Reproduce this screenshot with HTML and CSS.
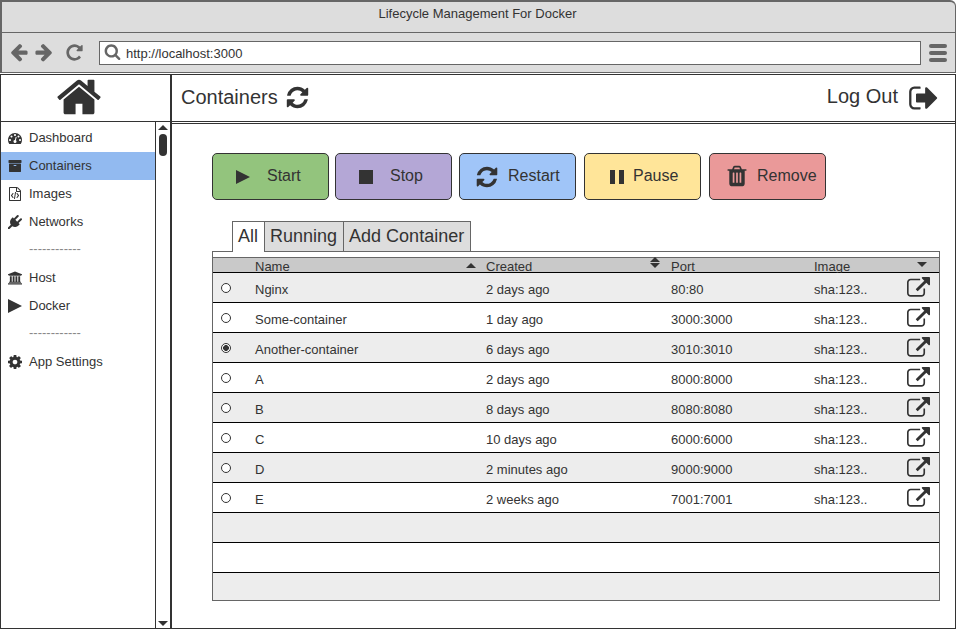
FILE: index.html
```html
<!DOCTYPE html>
<html lang="en">
<head>
<meta charset="utf-8">
<title>Lifecycle Management For Docker</title>
<link rel="stylesheet" href="styles.css">
</head>
<body>
<svg class="defs" width="0" height="0">
<symbol id="i-home" viewBox="0 0 1792 1792"><path d="M1472 992v480q0 26-19 45t-45 19h-384v-384h-256v384h-384q-26 0-45-19t-19-45v-480q0-1 .5-3t.5-3l575-474 575 474q1 2 1 6zm223-69l-62 74q-8 9-21 11h-3q-13 0-21-7l-692-577-692 577q-12 8-24 7-13-2-21-11l-62-74q-8-10-7-23.5t11-21.5l719-599q32-26 76-26t76 26l244 204v-195q0-14 9-23t23-9h192q14 0 23 9t9 23v408l219 182q10 8 11 21.5t-7 23.5z"/></symbol>
<symbol id="i-refresh" viewBox="0 0 1792 1792"><path d="M1639 1056q0 5-1 7-64 268-268 434.5t-478 166.5q-146 0-282.5-55t-243.5-157l-129 129q-19 19-45 19t-45-19-19-45v-448q0-26 19-45t45-19h448q26 0 45 19t19 45-19 45l-137 137q71 66 161 102t187 36q134 0 250-65t186-179q11-17 53-117 8-23 30-23h192q13 0 22.5 9.5t9.5 22.5zm25-800v448q0 26-19 45t-45 19h-448q-26 0-45-19t-19-45 19-45l138-138q-148-137-349-137-134 0-250 65t-186 179q-11 17-53 117-8 23-30 23h-199q-13 0-22.5-9.5t-9.5-22.5v-7q65-268 270-434.5t480-166.5q146 0 284 55.5t245 156.5l130-129q19-19 45-19t45 19 19 45z"/></symbol>
<symbol id="i-out" viewBox="0 0 1792 1792"><path d="M704 1440q0 4 1 20t.5 26.5-3 23.5-10 19.5-20.5 6.5h-320q-119 0-203.5-84.5t-84.5-203.5v-704q0-119 84.5-203.5t203.5-84.5h320q13 0 22.5 9.5t9.5 22.5q0 4 1 20t.5 26.5-3 23.5-10 19.5-20.5 6.5h-320q-66 0-113 47t-47 113v704q0 66 47 113t113 47h312l11.5 1 11.5 3 8 5.5 7 9 2 13.5zm928-544q0 26-19 45l-544 544q-19 19-45 19t-45-19-19-45v-288h-448q-26 0-45-19t-19-45v-384q0-26 19-45t45-19h448v-288q0-26 19-45t45-19 45 19l544 544q19 19 19 45z"/></symbol>
<symbol id="i-trash" viewBox="0 0 1792 1792"><path d="M704 1376v-704q0-14-9-23t-23-9h-64q-14 0-23 9t-9 23v704q0 14 9 23t23 9h64q14 0 23-9t9-23zm256 0v-704q0-14-9-23t-23-9h-64q-14 0-23 9t-9 23v704q0 14 9 23t23 9h64q14 0 23-9t9-23zm256 0v-704q0-14-9-23t-23-9h-64q-14 0-23 9t-9 23v704q0 14 9 23t23 9h64q14 0 23-9t9-23zm-544-992h448l-48-117q-7-9-17-11h-317q-10 2-17 11zm928 32v64q0 14-9 23t-23 9h-96v948q0 83-47 143.5t-113 60.5h-832q-66 0-113-58.5t-47-141.5v-952h-96q-14 0-23-9t-9-23v-64q0-14 9-23t23-9h309l70-167q15-37 54-63t79-26h320q40 0 79 26t54 63l70 167h309q14 0 23 9t9 23z"/></symbol>
<symbol id="i-ext" viewBox="0 0 1792 1792"><path d="M1408 928v320q0 119-84.5 203.5t-203.5 84.5h-832q-119 0-203.5-84.5t-84.5-203.5v-832q0-119 84.5-203.5t203.5-84.5h704q14 0 23 9t9 23v64q0 14-9 23t-23 9h-704q-66 0-113 47t-47 113v832q0 66 47 113t113 47h832q66 0 113-47t47-113v-320q0-14 9-23t23-9h64q14 0 23 9t9 23zm384-864v512q0 26-19 45t-45 19-45-19l-176-176-652 652q-10 10-23 10t-23-10l-114-114q-10-10-10-23t10-23l652-652-176-176q-19-19-19-45t19-45 45-19h512q26 0 45 19t19 45z"/></symbol>
<symbol id="i-search" viewBox="0 0 1792 1792"><path d="M1216 832q0-185-131.5-316.5t-316.5-131.5-316.5 131.5-131.5 316.5 131.5 316.5 316.5 131.5 316.5-131.5 131.5-316.5zm512 832q0 52-38 90t-90 38q-54 0-90-38l-343-342q-179 124-399 124-143 0-273.5-55.5t-225-150-150-225-55.5-273.5 55.5-273.5 150-225 225-150 273.5-55.5 273.5 55.5 225 150 150 225 55.5 273.5q0 220-124 399l343 343q37 37 37 90z"/></symbol>
<symbol id="i-left" viewBox="0 0 1792 1792"><path d="M1664 896v128q0 53-32.5 90.5t-84.5 37.5h-704l293 294q38 36 38 90t-38 90l-75 76q-37 37-90 37-52 0-91-37l-651-652q-37-37-37-90 0-52 37-91l651-650q38-38 91-38 52 0 90 38l75 74q38 38 38 91t-38 91l-293 293h704q52 0 84.5 37.5t32.5 90.5z"/></symbol>
<symbol id="i-right" viewBox="0 0 1792 1792"><path d="M1600 960q0 54-37 91l-651 651q-39 37-91 37-51 0-90-37l-75-75q-38-38-38-91t38-91l293-293h-704q-52 0-84.5-37.5t-32.5-90.5v-128q0-53 32.5-90.5t84.5-37.5h704l-293-294q-38-36-38-90t38-90l75-75q38-38 90-38 53 0 91 38l651 651q37 35 37 90z"/></symbol>
<symbol id="i-repeat" viewBox="0 0 1792 1792"><path d="M1664 256v448q0 26-19 45t-45 19h-448q-42 0-59-40-17-39 14-69l138-138q-148-137-349-137-104 0-198.5 40.5t-163.5 109.5-109.5 163.5-40.5 198.5 40.5 198.5 109.5 163.5 163.5 109.5 198.5 40.5q119 0 225-52t179-147q7-10 23-12 15 0 25 9l137 138q9 8 9.5 20.5t-7.5 22.5q-109 132-264 204.5t-327 72.5q-156 0-298-61t-245-164-164-245-61-298 61-298 164-245 245-164 298-61q147 0 284.5 55.5t244.5 156.5l130-129q29-31 70-14 39 17 39 59z"/></symbol>
<symbol id="i-dash" viewBox="0 0 1792 1792"><path d="M384 1152q0-53-37.5-90.5t-90.5-37.5-90.5 37.5-37.5 90.5 37.5 90.5 90.5 37.5 90.5-37.5 37.5-90.5zm192-448q0-53-37.5-90.5t-90.5-37.5-90.5 37.5-37.5 90.5 37.5 90.5 90.5 37.5 90.5-37.5 37.5-90.5zm428 481l101-382q6-26-7.5-48.5t-38.5-29.5-48 6.5-30 39.5l-101 382q-60 5-107 43.5t-63 98.5q-20 77 20 146t117 89 146-20 89-117q16-60-6-117t-72-91zm660-33q0-53-37.5-90.5t-90.5-37.5-90.5 37.5-37.5 90.5 37.5 90.5 90.5 37.5 90.5-37.5 37.5-90.5zm-640-640q0-53-37.5-90.5t-90.5-37.5-90.5 37.5-37.5 90.5 37.5 90.5 90.5 37.5 90.5-37.5 37.5-90.5zm448 192q0-53-37.5-90.5t-90.5-37.5-90.5 37.5-37.5 90.5 37.5 90.5 90.5 37.5 90.5-37.5 37.5-90.5zm320 448q0 261-141 483-19 29-54 29h-1402q-35 0-54-29-141-221-141-483 0-182 71-348t191-286 286-191 348-71 348 71 286 191 191 286 71 348z"/></symbol>
<symbol id="i-archive" viewBox="0 0 1792 1792"><path d="M1088 832q0-26-19-45t-45-19h-256q-26 0-45 19t-19 45 19 45 45 19h256q26 0 45-19t19-45zm576-192v960q0 26-19 45t-45 19h-1408q-26 0-45-19t-19-45v-960q0-26 19-45t45-19h1408q26 0 45 19t19 45zm64-448v256q0 26-19 45t-45 19h-1536q-26 0-45-19t-19-45v-256q0-26 19-45t45-19h1536q26 0 45 19t19 45z"/></symbol>
<symbol id="i-file" viewBox="0 0 1792 1792"><path d="M1596 380q28 28 48 76t20 88v1152q0 40-28 68t-68 28h-1344q-40 0-68-28t-28-68v-1600q0-40 28-68t68-28h896q40 0 88 20t76 48zm-444-244v376h376q-10-29-22-41l-313-313q-12-12-41-22zm384 1528v-1024h-416q-40 0-68-28t-28-68v-416h-768v1536h1280zm-928-896q8-11 21-12.5t24 6.5l51 38q11 8 12.5 21t-6.5 24l-182 243 182 243q8 11 6.5 24t-12.5 21l-51 38q-11 8-24 6.5t-21-12.5l-226-301q-14-19 0-38zm802 301q14 19 0 38l-226 301q-8 11-21 12.5t-24-6.5l-51-38q-11-8-12.5-21t6.5-24l182-243-182-243q-8-11-6.5-24t12.5-21l51-38q11-8 24-6.5t21 12.5zm-620 461q-13-2-20.5-13t-5.5-24l138-831q2-13 13-20.5t24-5.5l63 10q13 2 20.5 13t5.5 24l-138 831q-2 13-13 20.5t-24 5.5z"/></symbol>
<symbol id="i-plug" viewBox="0 0 1792 1792"><path d="M1755 453q37 38 37 90.5t-37 90.5l-401 400 150 150-160 160q-163 163-389.5 186.5t-411.5-100.5l-362 362h-181v-181l362-362q-124-185-100.5-411.5t186.5-389.5l160-160 150 150 400-401q38-37 91-37t90 37 37 90.5-37 90.5l-400 401 234 234 401-400q38-37 91-37t90 37z"/></symbol>
<symbol id="i-bank" viewBox="0 0 1920 1792"><path d="M960 0l960 384v128h-128q0 26-20.5 45t-48.5 19h-1526q-28 0-48.5-19t-20.5-45h-128v-128zm-704 640h256v768h128v-768h256v768h128v-768h256v768h128v-768h256v768h59q28 0 48.5 19t20.5 45v64h-1664v-64q0-26 20.5-45t48.5-19h59v-768zm1595 960q28 0 48.5 19t20.5 45v128h-1920v-128q0-26 20.5-45t48.5-19h1782z"/></symbol>
<symbol id="i-cog" viewBox="128 128 1536 1536"><path d="M1152 896q0-106-75-181t-181-75-181 75-75 181 75 181 181 75 181-75 75-181zm512-109v222q0 12-8 23t-20 13l-185 28q-19 54-39 91 35 50 107 138 10 12 10 25t-9 23q-27 37-99 108t-94 71q-12 0-26-9l-138-108q-44 23-91 38-16 136-29 186-7 28-36 28h-222q-14 0-24.5-8.5t-11.5-21.5l-28-184q-49-16-90-37l-141 107q-10 9-25 9-14 0-25-11-126-114-165-168-7-10-7-23 0-12 8-23 15-21 51-66.5t54-70.5q-27-50-41-99l-183-27q-13-2-21-12.5t-8-23.5v-222q0-12 8-23t19-13l186-28q14-46 39-92-40-57-107-138-10-12-10-24 0-10 9-23 26-36 98.5-107.5t94.5-71.5q13 0 26 10l138 107q44-23 91-38 16-136 29-186 7-28 36-28h222q14 0 24.5 8.5t11.5 21.5l28 184q49 16 90 37l142-107q9-9 24-9 13 0 25 10 129 119 165 170 7 8 7 22 0 12-8 23-15 21-51 66.5t-54 70.5q26 50 41 98l183 28q13 2 21 12.5t8 23.5z"/></symbol>
<symbol id="i-play" viewBox="0 0 14 14"><path d="M0 0L14 7L0 14Z"/></symbol>
</svg>

<div class="window">
  <header class="chrome">
    <div class="title">Lifecycle Management For Docker</div>
    <div class="toolbar">
      <svg class="nav-ic"><use href="#i-left"/></svg>
      <svg class="nav-ic"><use href="#i-right"/></svg>
      <svg class="nav-ic nav-reload"><use href="#i-repeat"/></svg>
      <div class="address">
        <svg class="search-ic"><use href="#i-search"/></svg>
        <span>http://localhost:3000</span>
      </div>
      <div class="menu"><i></i><i></i><i></i></div>
    </div>
  </header>

  <div class="page">
    <div class="topbar">
      <div class="brand"><svg class="home-ic"><use href="#i-home"/></svg></div>
      <div class="heading">
        <h1>Containers</h1>
        <svg class="head-ic"><use href="#i-refresh"/></svg>
        <span class="logout">Log Out</span>
        <svg class="out-ic"><use href="#i-out"/></svg>
      </div>
    </div>

    <div class="content">
      <nav class="sidebar">
        <ul class="nav">
          <li><svg class="side-ic"><use href="#i-dash"/></svg>Dashboard</li>
          <li class="active"><svg class="side-ic"><use href="#i-archive"/></svg>Containers</li>
          <li><svg class="side-ic"><use href="#i-file"/></svg>Images</li>
          <li><svg class="side-ic"><use href="#i-plug"/></svg>Networks</li>
          <li class="sep">------------</li>
          <li><svg class="side-ic"><use href="#i-bank"/></svg>Host</li>
          <li><svg class="side-ic"><use href="#i-play"/></svg>Docker</li>
          <li class="sep">------------</li>
          <li><svg class="side-ic"><use href="#i-cog"/></svg>App Settings</li>
        </ul>
        <div class="scrollbar">
          <span class="caret-up"></span>
          <span class="thumb"></span>
          <span class="caret-down end"></span>
        </div>
      </nav>

      <main class="main">
        <div class="actions">
          <button class="btn start"><svg><use href="#i-play"/></svg>Start</button>
          <button class="btn stop"><span class="square"></span>Stop</button>
          <button class="btn restart"><svg><use href="#i-refresh"/></svg>Restart</button>
          <button class="btn pause"><span class="bars"></span>Pause</button>
          <button class="btn remove"><svg><use href="#i-trash"/></svg>Remove</button>
        </div>

        <div class="tabs">
          <div class="tab on">All</div>
          <div class="tab">Running</div>
          <div class="tab">Add Container</div>
        </div>

        <div class="table">
          <div class="thead">
            <span></span>
            <span class="th">Name<i class="caret-up"></i></span>
            <span class="th">Created<i class="updown"><b class="caret-up"></b><b class="caret-down"></b></i></span>
            <span class="th">Port</span>
            <span class="th">Image</span>
            <span class="th-last"><i class="caret-down"></i></span>
          </div>
          <div class="row"><span class="radio"></span><span>Nginx</span><span>2 days ago</span><span>80:80</span><span>sha:123..</span><svg class="ext"><use href="#i-ext"/></svg></div>
          <div class="row"><span class="radio"></span><span>Some-container</span><span>1 day ago</span><span>3000:3000</span><span>sha:123..</span><svg class="ext"><use href="#i-ext"/></svg></div>
          <div class="row"><span class="radio checked"></span><span>Another-container</span><span>6 days ago</span><span>3010:3010</span><span>sha:123..</span><svg class="ext"><use href="#i-ext"/></svg></div>
          <div class="row"><span class="radio"></span><span>A</span><span>2 days ago</span><span>8000:8000</span><span>sha:123..</span><svg class="ext"><use href="#i-ext"/></svg></div>
          <div class="row"><span class="radio"></span><span>B</span><span>8 days ago</span><span>8080:8080</span><span>sha:123..</span><svg class="ext"><use href="#i-ext"/></svg></div>
          <div class="row"><span class="radio"></span><span>C</span><span>10 days ago</span><span>6000:6000</span><span>sha:123..</span><svg class="ext"><use href="#i-ext"/></svg></div>
          <div class="row"><span class="radio"></span><span>D</span><span>2 minutes ago</span><span>9000:9000</span><span>sha:123..</span><svg class="ext"><use href="#i-ext"/></svg></div>
          <div class="row"><span class="radio"></span><span>E</span><span>2 weeks ago</span><span>7001:7001</span><span>sha:123..</span><svg class="ext"><use href="#i-ext"/></svg></div>
          <div class="row"></div>
          <div class="row"></div>
          <div class="row last"></div>
        </div>
      </main>
    </div>
  </div>
</div>
</body>
</html>
```

FILE: styles.css
```css
* { box-sizing: border-box; }
html, body { margin: 0; padding: 0; }
body {
  width: 956px;
  height: 630px;
  overflow: hidden;
  background: #fff;
  color: #333;
  font: 13px "Liberation Sans", Arial, sans-serif;
}
.defs { position: absolute; }
svg { fill: #333; display: block; flex: none; }

.window { width: 956px; height: 630px; display: flex; flex-direction: column; }

/* browser chrome */
.chrome {
  height: 73px;
  background: #ddd;
  border-top: 2px solid #666;
  border-left: 2px solid #666;
  border-right: 1px solid #666;
  border-top-right-radius: 6px;
  flex: none;
}
.title {
  height: 31px;
  border-bottom: 1px solid #666;
  text-align: center;
  line-height: 24px;
  padding-right: 2px;
}
.toolbar {
  height: 40px;
  border-bottom: 1px solid #666;
  display: flex;
  align-items: center;
  padding-left: 7px;
}
.nav-ic { width: 20px; height: 20px; fill: #666; margin-right: 5px; margin-top: -1px; }
.nav-reload { width: 19px; height: 19px; margin-left: 6px; margin-right: 15px; }
.address {
  width: 822px;
  height: 24px;
  background: #fff;
  border: 1px solid #666;
  display: flex;
  align-items: center;
  padding-left: 4px;
  margin-top: 1px;
  color: #333;
}
.search-ic { width: 17px; height: 17px; fill: #666; margin-right: 5px; margin-top: -3px; }
.menu { margin-left: 8px; width: 18px; display: flex; flex-direction: column; gap: 3px; }
.menu i { display: block; height: 4px; border-radius: 2px; background: #666; }

/* page */
.page {
  height: 555px;
  margin-top: 1px;
  flex: none;
  border: 1px solid #333;
  display: flex;
  flex-direction: column;
}
.topbar { height: 47px; flex: none; display: flex; border-bottom: 1px solid #333; }
.brand {
  width: 171px;
  flex: none;
  border-right: 2px solid #333;
  display: flex;
  align-items: center;
  justify-content: center;
}
.home-ic { width: 48px; height: 48px; margin-top: -2px; margin-left: -14px; }
.heading { flex: 1; display: flex; align-items: center; padding-left: 9px; font-size: 20px; }
.heading h1 { margin: -1px 0 0; font-size: 20px; font-weight: normal; }
.head-ic { width: 25px; height: 25px; margin-left: 7px; margin-top: -1px; }
.logout { margin-left: auto; margin-top: -3px; }
.out-ic { width: 32px; height: 32px; margin-left: 10px; margin-right: 15px; margin-top: -1px; }

.content { flex: 1; display: flex; min-height: 0; }

/* sidebar */
.sidebar {
  width: 171px;
  flex: none;
  display: flex;
  border-right: 2px solid #333;
}
.nav { flex: 1; list-style: none; margin: 0; padding: 2px 0 0; }
.nav li {
  height: 28px;
  display: flex;
  align-items: center;
  padding-left: 7px;
  padding-bottom: 1px;
}
.nav li.active { background: #92baf0; }
.nav li.sep { padding-left: 28px; color: #888; padding-bottom: 3px; }
.side-ic { width: 14px; height: 14px; margin-right: 7px; }
.scrollbar {
  width: 15px;
  flex: none;
  border-left: 1px solid #333;
  display: flex;
  flex-direction: column;
  align-items: center;
  padding-top: 3px;
  padding-bottom: 2px;
}
.caret-up, .caret-down {
  display: block;
  width: 0;
  height: 0;
  border-left: 5px solid transparent;
  border-right: 5px solid transparent;
}
.caret-up { border-bottom: 5px solid #333; }
.caret-down { border-top: 5px solid #333; }
.scrollbar .thumb {
  width: 8px;
  height: 22px;
  margin-top: 4px;
  border-radius: 4px;
  background: #333;
}
.scrollbar .end { margin-top: auto; }

/* main */
.main {
  flex: 1;
  margin-top: 1px;
  border-top: 1px solid #333;
  padding: 29px 0 0 40px;
}
.actions { display: flex; gap: 6px; }
.btn {
  width: 117px;
  height: 47px;
  border: 1px solid #333;
  border-radius: 5px;
  display: flex;
  align-items: center;
  padding: 0 0 2px;
  color: #333;
  font: 16px "Liberation Sans", Arial, sans-serif;
}
.btn svg, .btn span { margin-top: 2px; }
.start { background: #93c47d; padding-left: 23px; }
.start svg { width: 14px; height: 14px; margin-right: 17px; }
.stop { background: #b4a7d6; padding-left: 23px; }
.square { width: 14px; height: 14px; background: #333; margin-right: 17px; flex: none; }
.restart { background: #a0c5f8; padding-left: 16px; margin-left: 1px; }
.restart svg { width: 24px; height: 24px; margin-right: 9px; margin-left: -1px; }
.pause { background: #ffe599; padding-left: 25px; margin-left: 2px; }
.bars {
  width: 14px;
  height: 14px;
  margin-right: 9px;
  flex: none;
  border-left: 5px solid #333;
  border-right: 5px solid #333;
}
.remove { background: #ea9999; padding-left: 15px; margin-left: 2px; }
.remove svg { width: 24px; height: 24px; margin-right: 8px; margin-top: 1px; }

.tabs { display: flex; margin: 21px 0 0 20px; height: 30px; font-size: 18px; }
.tab {
  height: 30px;
  padding: 0 6px 0 5px;
  line-height: 29px;
  background: #ddd;
  border: 1px solid #666;
  border-bottom: 0;
  margin-left: -1px;
  position: relative;
}
.tab:first-child { margin-left: 0; }
.tab.on { background: #fff; height: 31px; z-index: 1; }

.table {
  width: 728px;
  height: 350px;
  border: 1px solid #666;
  padding-top: 5px;
}
.thead, .row {
  display: grid;
  grid-template-columns: 42px 231px 185px 143px 93px 33px;
  align-items: center;
}
.thead {
  height: 16px;
  background: #c9c9c9;
  border-top: 1px solid #666;
  border-bottom: 1px solid #000;
}
.th { position: relative; height: 14px; line-height: 18px; display: block; }
.th > .caret-up { position: absolute; top: 5px; left: 211px; }
.updown { position: absolute; top: -1px; left: 164px; display: flex; flex-direction: column; gap: 1px; }
.th-last .caret-down { display: block; margin-top: -1px; margin-left: 10px; }
.row { position: relative; height: 30px; border-bottom: 1px solid #000; background: #fff; }
.row:nth-of-type(even) { background: #ededed; }
.row > span { padding-top: 3px; }
.row.last { height: 27px; border-bottom: 0; }
.radio {
  display: block;
  width: 10px;
  height: 10px;
  margin: 0 0 0 8px;
  border: 1px solid #333;
  border-radius: 50%;
  background: #fff;
}
.row > .radio { padding: 0; }
.radio.checked { background: radial-gradient(circle, #333 0, #333 2.6px, #fff 3.2px); }
.ext { width: 23px; height: 23px; margin-top: 1px; }
```
